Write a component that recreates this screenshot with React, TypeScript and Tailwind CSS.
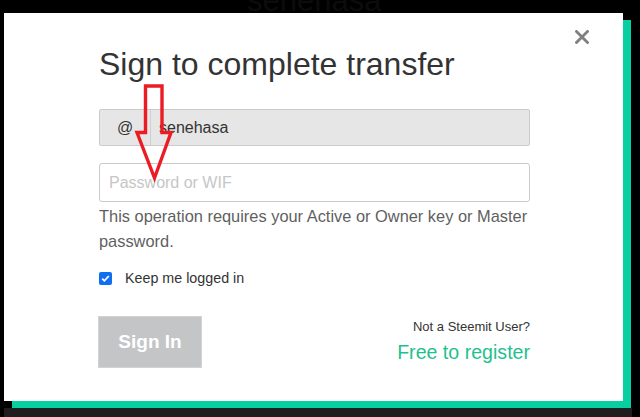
import React from "react";

export default function App() {
  return (
    <div
      className="relative w-[640px] h-[417px] overflow-hidden bg-black"
      style={{ fontFamily: '"Liberation Sans", Arial, sans-serif' }}
    >
      {/* faint text behind top edge */}
      <div className="h-[13px] overflow-hidden pl-[247px]">
        <div className="mt-[-17px] text-[31px] leading-[36px] text-[#0c0c0c]">senehasa</div>
      </div>

      {/* dark band under shadow */}
      <div className="absolute left-[4px] bottom-0 w-[628px] h-[9px] bg-[#1e1e1e]" />

      {/* modal */}
      <div className="relative ml-[4px] w-[619px] h-[388px] bg-white shadow-[8px_7px_0_#06cfa1] pl-[95px] pr-[93px] pt-[33px]">
        <button className="absolute left-[571px] top-[17px] w-[14px] h-[14px]" aria-label="close">
          <svg width="14" height="14" viewBox="0 0 14 14">
            <path d="M1.5 1.5 L12.5 12.5 M12.5 1.5 L1.5 12.5" stroke="#808080" strokeWidth="2.8" strokeLinecap="square" />
          </svg>
        </button>

        <h1 className="text-[32px] leading-[36px] text-[#333333]">Sign to complete transfer</h1>

        <div className="mt-[27px] flex h-[37px] rounded-[2px] border border-[#cbcbcb] bg-[#e6e6e6] text-[16px] text-[#333333]">
          <div className="flex w-[51px] items-center justify-center border-r border-[#cfcfcf]">@</div>
          <div className="flex items-center pl-[8px]">senehasa</div>
        </div>

        <div className="mt-[17px] flex h-[39px] items-center rounded-[3px] border border-[#cbcbcb] bg-white pl-[9px] text-[16px] text-[#c6c6c6]">
          Password or WIF
        </div>

        <p className="mt-[2px] text-[16.4px] leading-[25px] text-[#5f5f5f]">
          This operation requires your Active or Owner key or Master password.
        </p>

        <div className="mt-[15px] flex items-center">
          <div className="flex h-[13px] w-[13px] items-center justify-center rounded-[2px] bg-[#0f6ff0]">
            <svg width="11" height="11" viewBox="0 0 11 11">
              <path d="M2.2 5.6 L4.4 7.8 L8.8 3" fill="none" stroke="white" strokeWidth="1.8" />
            </svg>
          </div>
          <span className="ml-[13px] text-[14.3px] leading-[18px] text-[#333333]">Keep me logged in</span>
        </div>

        <div className="mt-[29px] flex items-start justify-between">
          <div className="flex h-[52px] w-[104px] ml-[-1px] items-center justify-center border border-[#d3d3d3] bg-[#c4c5c7] text-[19px] font-bold text-white">
            Sign In
          </div>
          <div className="flex flex-col items-end">
            <div className="mt-[2px] text-[13px] leading-[18px] text-[#333333]">Not a Steemit User?</div>
            <div className="mt-[4px] text-[19.6px] leading-[24px] text-[#1fbf8f]">Free to register</div>
          </div>
        </div>
      </div>

      {/* red annotation arrow */}
      <svg className="absolute left-0 top-0 pointer-events-none" width="640" height="417">
        <polygon
          points="145.5,86 162,86 162,132.5 171,132.5 154.5,178 137,132.5 145.5,132.5"
          fill="none"
          stroke="#ec1c24"
          strokeWidth="3.4"
          strokeLinejoin="miter"
        />
      </svg>
    </div>
  );
}
